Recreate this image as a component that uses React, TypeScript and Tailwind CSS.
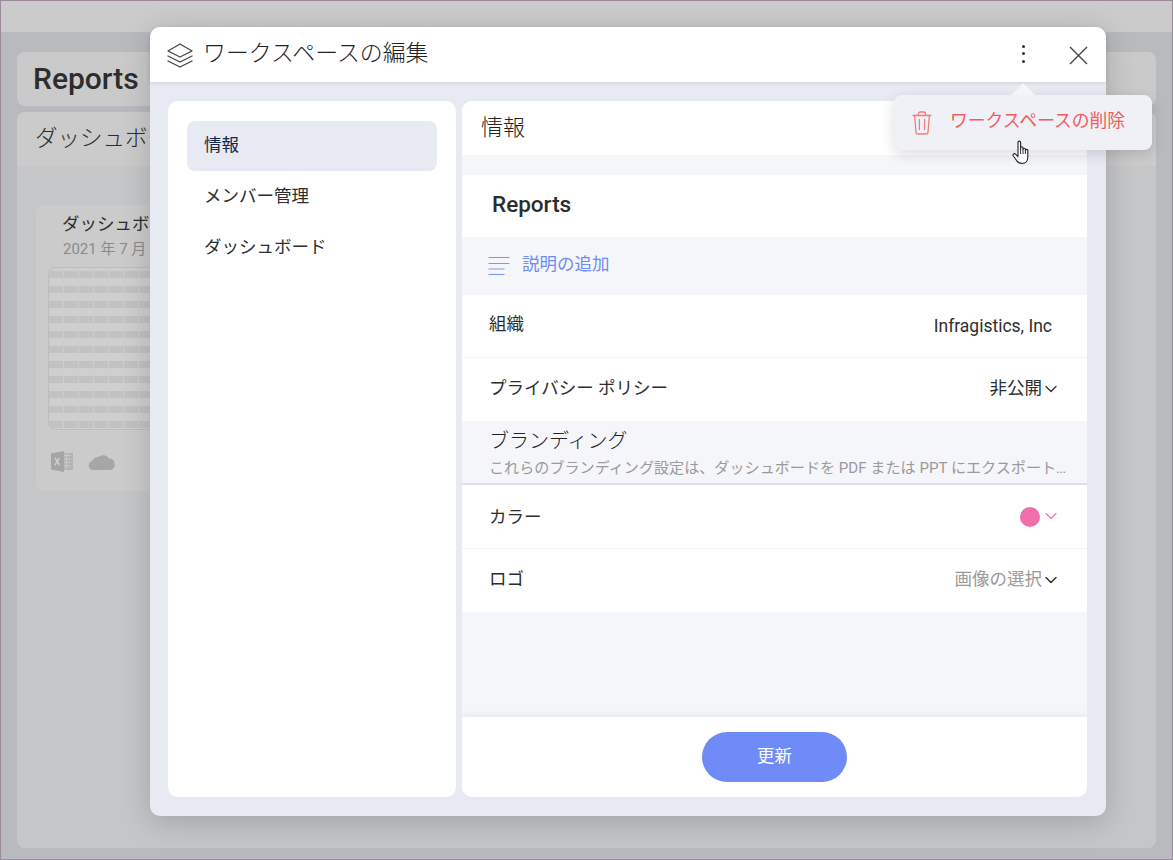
import { ChevronDown } from 'lucide-react';

const font = { fontFamily: '"Roboto", "Noto Sans CJK JP", sans-serif' };

function LayersIcon() {
  return (
    <svg width="26" height="26" viewBox="0 0 26 26" fill="none" stroke="#444" strokeWidth="1.3" strokeLinejoin="round" strokeLinecap="round" aria-hidden>
      <path d="M13 2 L25 9 L13 15 L1 9 Z" />
      <path d="M1 14 L13 20 L25 14" />
      <path d="M1 19 L13 25 L25 19" />
    </svg>
  );
}

function TrashIcon() {
  return (
    <svg width="20" height="24" viewBox="0 0 20 24" fill="none" stroke="#f47c7c" strokeWidth="1.3" strokeLinecap="round" strokeLinejoin="round" aria-hidden>
      <path d="M1 4.5h18" />
      <path d="M6.5 4.5 V2.6 A1.6 1.6 0 0 1 8.1 1 h3.8 a1.6 1.6 0 0 1 1.6 1.6 V4.5" />
      <path d="M2.6 4.5 L4 21 a2 2 0 0 0 2 2 h8 a2 2 0 0 0 2 -2 L17.4 4.5" />
      <path d="M7.4 8.5v10M12.6 8.5v10" />
    </svg>
  );
}

function HandCursor() {
  return (
    <svg width="18" height="25" viewBox="0 0 18 25" fill="#fff" stroke="#222" strokeWidth="1.1" strokeLinejoin="round" aria-hidden>
      <path d="M6 12 V2.4 a1.3 1.3 0 0 1 2.6 0 V9 V8 a1.2 1.2 0 0 1 2.4 0 V9.4 a1.2 1.2 0 0 1 2.4 0 V10.6 a1.2 1.2 0 0 1 2.4 0 V17 c0 3.5 -2 6.5 -5.6 6.5 c-3 0 -4.4 -1 -5.6 -3 L1.2 15.8 c-0.8 -1.5 1 -2.8 2.3 -1.6 L6 16.6 Z" />
      <path d="M8.6 9v5M11 9.4v4.6M13.4 10.6v3.4" fill="none" strokeWidth="0.9" />
    </svg>
  );
}

function ListIcon() {
  return (
    <svg width="22" height="20" viewBox="0 0 22 20" fill="none" stroke="#7f95f7" strokeWidth="1.2" aria-hidden>
      <path d="M0.5 1.5h21M0.5 7.5h21M0.5 13h16M0.5 18.5h16" />
    </svg>
  );
}

function ExcelIcon() {
  return (
    <svg width="23" height="21" viewBox="0 0 23 21" aria-hidden>
      <rect x="9" y="2" width="13" height="17" fill="#b4b4b4" />
      <path d="M11 4.5h9M11 8h9M11 11.5h9M11 15h9M15.5 3v15" stroke="#cacaca" strokeWidth="1" />
      <path d="M0 2.5 L13 0 V21 L0 18.5 Z" fill="#a5a5a5" />
      <path d="M4 7 L8.5 14M8.5 7 L4 14" stroke="#d0d0d0" strokeWidth="1.4" />
    </svg>
  );
}

function CloudIcon() {
  return (
    <svg width="27" height="17" viewBox="0 0 27 17" fill="#a6a6a6" aria-hidden>
      <path d="M5 17 a4.6 4.6 0 0 1 -0.6 -9.1 a6 6 0 0 1 6 -3.9 A7 7 0 0 1 21 5.6 a5.8 5.8 0 0 1 1.4 11.4 Z" />
    </svg>
  );
}

function Thumbnail() {
  const rows = Array.from({ length: 11 });
  const cols = Array.from({ length: 8 });
  return (
    <div className="w-[140px] h-[163px] ml-[-15px] mt-[8px] rounded-[8px] border border-[#bdbdbd] overflow-hidden bg-[#cdcdcd] pt-[3px]">
      <div className="flex gap-[1px]">
        {cols.map((_, c) => (
          <div key={c} className="w-[14px] shrink-0">
            {rows.map((_, r) => (
              <div key={r} className="h-[15px] flex flex-col">
                <div className="h-[7px] bg-[#c2c2c2]" />
                <div className="h-[8px] bg-[#cfcfcf]" />
              </div>
            ))}
          </div>
        ))}
      </div>
    </div>
  );
}

function Backdrop() {
  return (
    <div className="h-[860px] flex flex-col bg-[#b9babe] border border-[#9b8a9b] overflow-hidden">
      <div className="h-[31px] shrink-0 bg-[#cbcbcb]" />
      <div className="flex-1 flex flex-col px-[16px] pt-[20px] pb-[11px]">
        <div className="h-[54px] shrink-0 rounded-[8px] bg-[#cacaca] flex items-center pl-[16px] pb-[2px] text-[30px] font-medium text-[#2d2d2d]">
          Reports
        </div>
        <div className="mt-[6px] flex-1 rounded-[8px] overflow-hidden bg-[#c5c6c7] flex flex-col">
          <div className="h-[54px] shrink-0 bg-[#cbcbcb] flex items-center pl-[18px] text-[22.5px] font-light text-[#2d2d2d]">
            ダッシュボード
          </div>
          <div className="ml-[19px] mt-[39px] w-[360px] h-[286px] rounded-[8px] bg-[#cbcbcb] pl-[27px] pt-[6px]">
            <div className="text-[17.5px] leading-[26px] text-[#2d2d2d] -ml-[1px]">ダッシュボード</div>
            <div className="text-[15px] leading-[20px] text-[#8a8a8a] mt-[2px]">2021 年 7 月</div>
            <Thumbnail />
            <div className="flex items-center gap-[14px] ml-[-12px] mt-[21px]">
              <ExcelIcon />
              <CloudIcon />
            </div>
          </div>
        </div>
      </div>
    </div>
  );
}

function Row({ label, children, border = true, tall = false }: { label: string; children: React.ReactNode; border?: boolean; tall?: boolean }) {
  return (
    <div className={`${tall ? 'h-[64px]' : 'h-[63px]'} shrink-0 bg-white flex items-center justify-between pl-[27px] pr-[30px] ${border ? 'border-b border-[#f3f4f8]' : ''}`}>
      <span className={`text-[17.5px] text-[#2d2d2d] ${tall ? 'mt-[1px]' : '-mt-[3px]'}`}>{label}</span>
      {children}
    </div>
  );
}

function Modal() {
  return (
    <div className="absolute left-[150px] top-[27px] w-[956px] h-[789px] rounded-[10px] bg-[#e7eaf3] shadow-[0_6px_30px_rgba(0,0,0,0.18)] flex flex-col">
      <div className="relative h-[55px] shrink-0 rounded-t-[10px] bg-white shadow-[0_1px_4px_rgba(0,0,0,0.12)] flex items-center pl-[17px] pr-[18px]">
        <LayersIcon />
        <span className="ml-[10px] text-[22.9px] font-light text-[#222]">ワークスペースの編集</span>
        <div className="ml-auto flex items-center gap-[43px]">
          <div className="flex flex-col gap-[4.5px] pb-[2px]">
            <span className="w-[3px] h-[3px] rounded-full bg-[#333]" />
            <span className="w-[3px] h-[3px] rounded-full bg-[#333]" />
            <span className="w-[3px] h-[3px] rounded-full bg-[#333]" />
          </div>
          <svg width="20" height="20" viewBox="0 0 20 20" stroke="#444" strokeWidth="1.4" aria-hidden>
            <path d="M2 2 L19 19 M19 2 L2 19" />
          </svg>
        </div>
      </div>

      <div className="flex-1 flex gap-[6px] pl-[18px] pr-[19px] pt-[19px] pb-[19px] min-h-0">
        <aside className="w-[288px] rounded-[10px] bg-white pt-[20px] px-[19px]">
          <div className="h-[50px] rounded-[8px] bg-[#e7eaf3] flex items-center pl-[17px] pb-[2px] text-[17.5px] text-[#14264a]">情報</div>
          <div className="h-[52px] flex items-center pl-[17px] pb-[2px] text-[17.5px] text-[#2d2d2d]">メンバー管理</div>
          <div className="h-[51px] flex items-center pl-[17px] pb-[2px] text-[17.5px] text-[#2d2d2d]">ダッシュボード</div>
        </aside>

        <main className="flex-1 rounded-[10px] overflow-hidden bg-[#f5f6fa] flex flex-col">
          <div className="h-[54px] shrink-0 bg-white flex items-center pl-[19px] pb-[2px] text-[22px] font-light text-[#222]">情報</div>
          <div className="h-[20px] shrink-0" />
          <div className="h-[62px] shrink-0 bg-white flex items-center pl-[30px] pb-[2px] text-[22.5px] font-medium text-[#2d2d2d]">Reports</div>
          <div className="h-[58px] shrink-0 flex items-center pl-[26px] text-[17.5px] text-[#6f8bf8]">
            <ListIcon />
            <span className="ml-[12px] -mt-[3px]">説明の追加</span>
          </div>
          <Row label="組織">
            <span className="text-[17.5px] text-[#2d2d2d] mr-[5px]">Infragistics, Inc</span>
          </Row>
          <Row label="プライバシー ポリシー" border={false}>
            <span className="flex items-center text-[17.5px] text-[#2d2d2d] -mt-[2px]">
              非公開
              <ChevronDown size={20} strokeWidth={1.6} className="text-[#333] -ml-[1px] -mr-[4px]" />
            </span>
          </Row>
          <div className="h-[64px] shrink-0 border-b-2 border-[#dfe0e5] pl-[27px] pr-[18px] pt-[6px]">
            <div className="text-[20px] leading-[28px] font-light text-[#222]">ブランディング</div>
            <div className="text-[15.1px] leading-[20px] mt-[3px] text-[#9a9a9a] whitespace-nowrap">
              これらのブランディング設定は、ダッシュボードを PDF または PPT にエクスポート…
            </div>
          </div>
          <Row label="カラー" tall>
            <span className="flex items-center">
              <span className="w-[20px] h-[20px] rounded-full bg-[#f06fab]" />
              <ChevronDown size={20} strokeWidth={1.3} className="text-[#f06fab] ml-[1px] -mt-[2px] -mr-[4px]" />
            </span>
          </Row>
          <Row label="ロゴ" border={false}>
            <span className="flex items-center text-[17.5px] text-[#9a9a9a] -mt-[2px]">
              画像の選択
              <ChevronDown size={20} strokeWidth={1.8} className="text-[#333] -ml-[1px] -mr-[4px]" />
            </span>
          </Row>
          <div className="flex-1" />
          <div className="h-[80px] shrink-0 bg-white shadow-[0_-2px_6px_rgba(0,0,0,0.06)] flex items-center justify-center">
            <button type="button" className="w-[145px] h-[50px] rounded-[25px] bg-[#6f8bf8] text-white text-[17.5px] pb-[2px]">更新</button>
          </div>
        </main>
      </div>
    </div>
  );
}

function DeleteMenu() {
  return (
    <div className="absolute left-[894px] top-[95px] w-[258px] h-[55px] rounded-[8px] bg-[#f0f1f6] shadow-[0_4px_14px_rgba(0,0,0,0.14)] flex items-center pl-[18px]">
      <div className="absolute left-[117px] top-[-12px] w-0 h-0 border-x-[12px] border-x-transparent border-b-[12px] border-b-[#f4f5f9]" />
      <TrashIcon />
      <span className="ml-[18px] -mt-[2px] text-[17.8px] text-[#f25c5c]">ワークスペースの削除</span>
      <div className="absolute left-[118px] top-[45px]">
        <HandCursor />
      </div>
    </div>
  );
}

export default function App() {
  return (
    <div className="relative w-[1173px] h-[860px] overflow-hidden" style={font}>
      <Backdrop />
      <Modal />
      <DeleteMenu />
    </div>
  );
}
